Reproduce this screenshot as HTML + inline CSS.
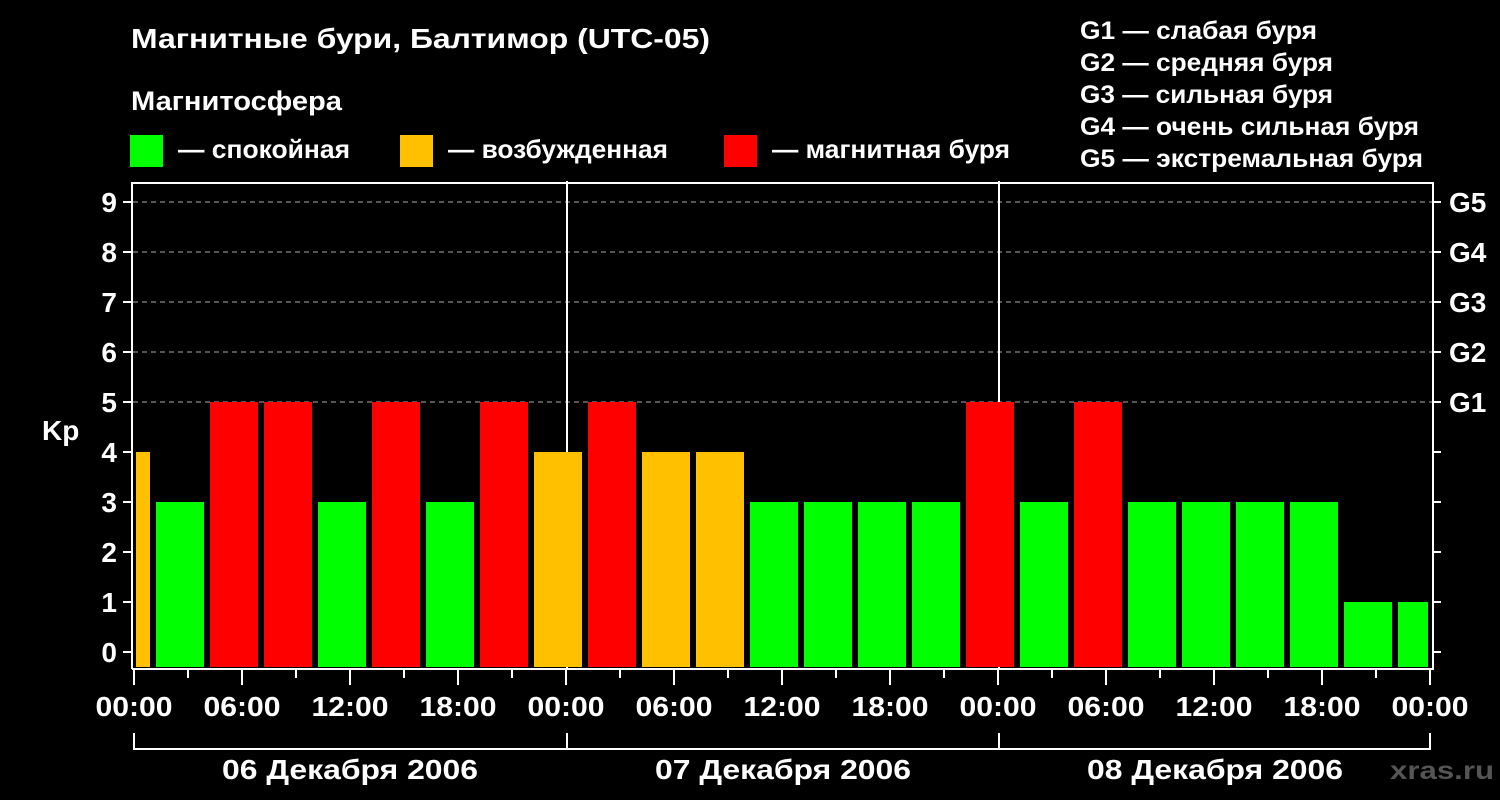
<!DOCTYPE html>
<html><head><meta charset="utf-8"><style>
html,body{margin:0;padding:0;background:#000;}
svg{display:block;}
text{font-family:"Liberation Sans",Arial,sans-serif;font-weight:bold;fill:#fff;}
</style></head><body>
<svg width="1500" height="800" viewBox="0 0 1500 800" xmlns="http://www.w3.org/2000/svg">
<rect width="1500" height="800" fill="#000"/>
<text x="131" y="48" font-size="28" textLength="579" lengthAdjust="spacingAndGlyphs">Магнитные бури, Балтимор (UTC-05)</text>
<text x="131" y="110" font-size="27" textLength="211" lengthAdjust="spacingAndGlyphs">Магнитосфера</text>
<rect x="130" y="135" width="33" height="32" fill="#00ff00"/>
<text x="178" y="158" font-size="26" textLength="172" lengthAdjust="spacingAndGlyphs">— спокойная</text>
<rect x="400" y="135" width="33" height="32" fill="#ffc000"/>
<text x="448" y="158" font-size="26" textLength="220" lengthAdjust="spacingAndGlyphs">— возбужденная</text>
<rect x="724" y="135" width="33" height="32" fill="#ff0000"/>
<text x="772" y="158" font-size="26" textLength="238" lengthAdjust="spacingAndGlyphs">— магнитная буря</text>
<g font-size="25">
<text x="1080" y="39" textLength="237" lengthAdjust="spacingAndGlyphs">G1 — слабая буря</text>
<text x="1080" y="71" textLength="253" lengthAdjust="spacingAndGlyphs">G2 — средняя буря</text>
<text x="1080" y="103" textLength="253" lengthAdjust="spacingAndGlyphs">G3 — сильная буря</text>
<text x="1080" y="135" textLength="339" lengthAdjust="spacingAndGlyphs">G4 — очень сильная буря</text>
<text x="1080" y="167" textLength="343" lengthAdjust="spacingAndGlyphs">G5 — экстремальная буря</text>
</g>
<g stroke="#888" stroke-width="1.3" stroke-dasharray="5,4">
<line x1="133" y1="202" x2="1432" y2="202"/>
<line x1="133" y1="252" x2="1432" y2="252"/>
<line x1="133" y1="302" x2="1432" y2="302"/>
<line x1="133" y1="352" x2="1432" y2="352"/>
<line x1="133" y1="402" x2="1432" y2="402"/>
</g>
<g stroke="#fff" stroke-width="2">
<line x1="567" y1="181" x2="567" y2="668"/>
<line x1="999" y1="181" x2="999" y2="668"/>
</g>
<g>
<rect x="136" y="452" width="14" height="215" fill="#ffc000"/>
<rect x="156" y="502" width="48" height="165" fill="#00ff00"/>
<rect x="210" y="402" width="48" height="265" fill="#ff0000"/>
<rect x="264" y="402" width="48" height="265" fill="#ff0000"/>
<rect x="318" y="502" width="48" height="165" fill="#00ff00"/>
<rect x="372" y="402" width="48" height="265" fill="#ff0000"/>
<rect x="426" y="502" width="48" height="165" fill="#00ff00"/>
<rect x="480" y="402" width="48" height="265" fill="#ff0000"/>
<rect x="534" y="452" width="48" height="215" fill="#ffc000"/>
<rect x="588" y="402" width="48" height="265" fill="#ff0000"/>
<rect x="642" y="452" width="48" height="215" fill="#ffc000"/>
<rect x="696" y="452" width="48" height="215" fill="#ffc000"/>
<rect x="750" y="502" width="48" height="165" fill="#00ff00"/>
<rect x="804" y="502" width="48" height="165" fill="#00ff00"/>
<rect x="858" y="502" width="48" height="165" fill="#00ff00"/>
<rect x="912" y="502" width="48" height="165" fill="#00ff00"/>
<rect x="966" y="402" width="48" height="265" fill="#ff0000"/>
<rect x="1020" y="502" width="48" height="165" fill="#00ff00"/>
<rect x="1074" y="402" width="48" height="265" fill="#ff0000"/>
<rect x="1128" y="502" width="48" height="165" fill="#00ff00"/>
<rect x="1182" y="502" width="48" height="165" fill="#00ff00"/>
<rect x="1236" y="502" width="48" height="165" fill="#00ff00"/>
<rect x="1290" y="502" width="48" height="165" fill="#00ff00"/>
<rect x="1344" y="602" width="48" height="65" fill="#00ff00"/>
<rect x="1398" y="602" width="30" height="65" fill="#00ff00"/>
</g>
<g stroke="#fff" stroke-width="2" fill="none">
<path d="M132 669 V183 H1433 V669 H132"/>
</g>
<g stroke="#fff" stroke-width="2">
<line x1="123" y1="202" x2="131" y2="202"/><line x1="1433" y1="202" x2="1441" y2="202"/>
<line x1="123" y1="252" x2="131" y2="252"/><line x1="1433" y1="252" x2="1441" y2="252"/>
<line x1="123" y1="302" x2="131" y2="302"/><line x1="1433" y1="302" x2="1441" y2="302"/>
<line x1="123" y1="352" x2="131" y2="352"/><line x1="1433" y1="352" x2="1441" y2="352"/>
<line x1="123" y1="402" x2="131" y2="402"/><line x1="1433" y1="402" x2="1441" y2="402"/>
<line x1="123" y1="452" x2="131" y2="452"/><line x1="1433" y1="452" x2="1441" y2="452"/>
<line x1="123" y1="502" x2="131" y2="502"/><line x1="1433" y1="502" x2="1441" y2="502"/>
<line x1="123" y1="552" x2="131" y2="552"/><line x1="1433" y1="552" x2="1441" y2="552"/>
<line x1="123" y1="602" x2="131" y2="602"/><line x1="1433" y1="602" x2="1441" y2="602"/>
<line x1="123" y1="652" x2="131" y2="652"/><line x1="1433" y1="652" x2="1441" y2="652"/>
<line x1="134" y1="669" x2="134" y2="685"/><line x1="188" y1="669" x2="188" y2="678"/>
<line x1="242" y1="669" x2="242" y2="685"/><line x1="296" y1="669" x2="296" y2="678"/>
<line x1="350" y1="669" x2="350" y2="685"/><line x1="404" y1="669" x2="404" y2="678"/>
<line x1="458" y1="669" x2="458" y2="685"/><line x1="512" y1="669" x2="512" y2="678"/>
<line x1="566" y1="669" x2="566" y2="685"/><line x1="620" y1="669" x2="620" y2="678"/>
<line x1="674" y1="669" x2="674" y2="685"/><line x1="728" y1="669" x2="728" y2="678"/>
<line x1="782" y1="669" x2="782" y2="685"/><line x1="836" y1="669" x2="836" y2="678"/>
<line x1="890" y1="669" x2="890" y2="685"/><line x1="944" y1="669" x2="944" y2="678"/>
<line x1="998" y1="669" x2="998" y2="685"/><line x1="1052" y1="669" x2="1052" y2="678"/>
<line x1="1106" y1="669" x2="1106" y2="685"/><line x1="1160" y1="669" x2="1160" y2="678"/>
<line x1="1214" y1="669" x2="1214" y2="685"/><line x1="1268" y1="669" x2="1268" y2="678"/>
<line x1="1322" y1="669" x2="1322" y2="685"/><line x1="1376" y1="669" x2="1376" y2="678"/>
<line x1="1430" y1="669" x2="1430" y2="685"/>
</g>
<g stroke="#fff" stroke-width="2" fill="none">
<path d="M134 733 V749 H1430 V733"/>
<line x1="567" y1="733" x2="567" y2="749"/>
<line x1="999" y1="733" x2="999" y2="749"/>
</g>
<g font-size="28" text-anchor="end">
<text x="117" y="212">9</text><text x="117" y="262">8</text><text x="117" y="312">7</text>
<text x="117" y="362">6</text><text x="117" y="412">5</text><text x="117" y="462">4</text>
<text x="117" y="512">3</text><text x="117" y="562">2</text><text x="117" y="612">1</text>
<text x="117" y="662">0</text>
</g>
<g font-size="28">
<text x="1449" y="212">G5</text><text x="1449" y="262">G4</text><text x="1449" y="312">G3</text>
<text x="1449" y="362">G2</text><text x="1449" y="412">G1</text>
</g>
<text x="42" y="440" font-size="28">Kp</text>
<g font-size="28" text-anchor="middle">
<text x="134" y="716" textLength="77" lengthAdjust="spacingAndGlyphs">00:00</text>
<text x="242" y="716" textLength="77" lengthAdjust="spacingAndGlyphs">06:00</text>
<text x="350" y="716" textLength="77" lengthAdjust="spacingAndGlyphs">12:00</text>
<text x="458" y="716" textLength="77" lengthAdjust="spacingAndGlyphs">18:00</text>
<text x="566" y="716" textLength="77" lengthAdjust="spacingAndGlyphs">00:00</text>
<text x="674" y="716" textLength="77" lengthAdjust="spacingAndGlyphs">06:00</text>
<text x="782" y="716" textLength="77" lengthAdjust="spacingAndGlyphs">12:00</text>
<text x="890" y="716" textLength="77" lengthAdjust="spacingAndGlyphs">18:00</text>
<text x="998" y="716" textLength="77" lengthAdjust="spacingAndGlyphs">00:00</text>
<text x="1106" y="716" textLength="77" lengthAdjust="spacingAndGlyphs">06:00</text>
<text x="1214" y="716" textLength="77" lengthAdjust="spacingAndGlyphs">12:00</text>
<text x="1322" y="716" textLength="77" lengthAdjust="spacingAndGlyphs">18:00</text>
<text x="1430" y="716" textLength="77" lengthAdjust="spacingAndGlyphs">00:00</text>
</g>
<g font-size="28" text-anchor="middle">
<text x="350" y="779" textLength="256" lengthAdjust="spacingAndGlyphs">06 Декабря 2006</text>
<text x="783" y="779" textLength="256" lengthAdjust="spacingAndGlyphs">07 Декабря 2006</text>
<text x="1215" y="779" textLength="256" lengthAdjust="spacingAndGlyphs">08 Декабря 2006</text>
</g>
<text x="1390" y="779" font-size="25" style="fill:#555" textLength="104" lengthAdjust="spacingAndGlyphs">xras.ru</text>
</svg>
</body></html>
